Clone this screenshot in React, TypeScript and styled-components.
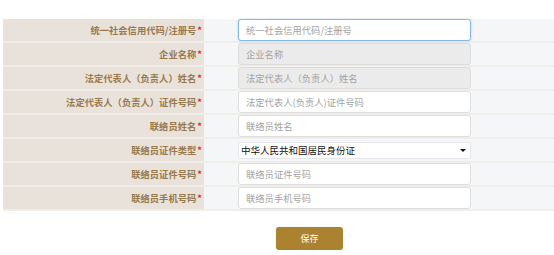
import React, { useState } from 'react';
import styled, { createGlobalStyle } from 'styled-components';

const GlobalStyle = createGlobalStyle`
    body {
        margin: 0;
        background: #fff;
        font-family: "Noto Sans CJK SC", "Liberation Sans", sans-serif;
    }
`;

const Page = styled.div`
    padding: 19px 0 0 3px;
`;

const FormTable = styled.div`
    display: flex;
    flex-direction: column;
`;

const Row = styled.div`
    display: grid;
    grid-template-columns: 201px 1fr;
    height: 22px;
    border-bottom: 2px solid #f1eeea;
`;

const LabelCell = styled.div`
    background: #e9e2db;
    display: flex;
    align-items: center;
    justify-content: flex-end;
    padding-right: 2px;
    font-size: 9.3px;
    font-weight: bold;
    color: #98794a;
`;

const Star = styled.span`
    color: #f0262b;
    margin-left: 1px;
`;

const ValueCell = styled.div`
    background: #f5f6f8;
    display: flex;
    align-items: center;
    padding-left: 34px;
`;

const TextInput = styled.input<{ $focused?: boolean }>`
    box-sizing: border-box;
    width: 233px;
    height: 22px;
    padding: 0 7px;
    font-family: inherit;
    font-size: 9.3px;
    color: #333;
    border: 1px solid ${(p) => (p.$focused ? '#86b9ea' : '#dedede')};
    border-radius: 3px;
    background: #fff;
    outline: none;
    box-shadow: ${(p) => (p.$focused ? '0 0 2px rgba(102, 175, 233, 0.6)' : 'none')};

    &::placeholder {
        color: #a3a3a3;
    }

    &:disabled {
        background: #ebebeb;
        border-color: #dcdcdc;
    }
`;

const SelectWrap = styled.div`
    position: relative;
    display: flex;
    width: 233px;
    height: 17px;

    &::after {
        content: '';
        position: absolute;
        right: 5px;
        top: 7px;
        border-left: 3px solid transparent;
        border-right: 3px solid transparent;
        border-top: 3px solid #111;
        pointer-events: none;
    }
`;

const Select = styled.select`
    box-sizing: border-box;
    display: block;
    width: 233px;
    height: 17px;
    margin: 0;
    padding: 0 2px;
    font-family: inherit;
    font-size: 9.5px;
    line-height: 15px;
    color: #111;
    border: 1px solid #e4e8ee;
    border-radius: 2px;
    background: #fff;
    outline: none;
    appearance: none;
    -webkit-appearance: none;
`;

const Actions = styled.div`
    padding: 12px 0 0 273px;
`;

const SaveButton = styled.button`
    width: 67px;
    height: 23px;
    border: none;
    border-radius: 3px;
    background: #ab8230;
    color: #fff;
    font-family: inherit;
    font-size: 9px;
    cursor: pointer;
`;

interface Field {
    label: string;
    placeholder: string;
    disabled?: boolean;
    focused?: boolean;
    select?: boolean;
}

const fields: Field[] = [
    { label: '统一社会信用代码/注册号', placeholder: '统一社会信用代码/注册号', focused: true },
    { label: '企业名称', placeholder: '企业名称', disabled: true },
    { label: '法定代表人（负责人）姓名', placeholder: '法定代表人（负责人）姓名', disabled: true },
    { label: '法定代表人（负责人）证件号码', placeholder: '法定代表人(负责人)证件号码' },
    { label: '联络员姓名', placeholder: '联络员姓名' },
    { label: '联络员证件类型', placeholder: '', select: true },
    { label: '联络员证件号码', placeholder: '联络员证件号码' },
    { label: '联络员手机号码', placeholder: '联络员手机号码' },
];

const App: React.FC = () => {
    const [idType, setIdType] = useState('中华人民共和国居民身份证');

    return (
        <Page>
            <GlobalStyle />
            <FormTable>
                {fields.map((f) => (
                    <Row key={f.label}>
                        <LabelCell>
                            {f.label}
                            <Star>*</Star>
                        </LabelCell>
                        <ValueCell>
                            {f.select ? (
                                <SelectWrap>
                                    <Select value={idType} onChange={(e) => setIdType(e.target.value)}>
                                        <option>中华人民共和国居民身份证</option>
                                        <option>护照</option>
                                    </Select>
                                </SelectWrap>
                            ) : (
                                <TextInput
                                    type="text"
                                    placeholder={f.placeholder}
                                    disabled={f.disabled}
                                    $focused={f.focused}
                                />
                            )}
                        </ValueCell>
                    </Row>
                ))}
            </FormTable>
            <Actions>
                <SaveButton>保存</SaveButton>
            </Actions>
        </Page>
    );
};

export default App;
